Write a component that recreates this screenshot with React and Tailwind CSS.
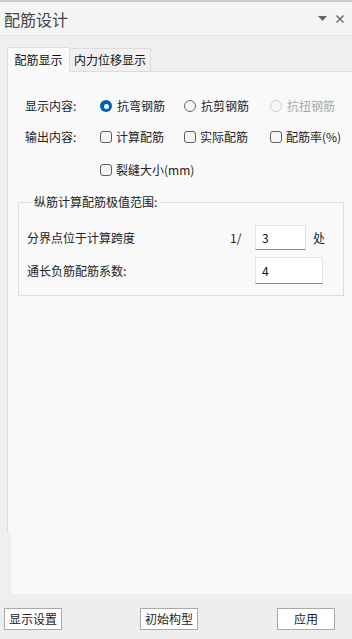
import React from "react";

const font = { fontFamily: '"Noto Sans CJK SC", "Noto Sans", sans-serif' };

const Radio = ({ checked, disabled, label }) => (
  <label className={`flex items-center gap-[5px] ${disabled ? "text-[#a8a8a8]" : "text-[#222]"}`}>
    {checked ? (
      <span className="w-[12px] h-[12px] rounded-full bg-[#005fb8] flex items-center justify-center">
        <span className="w-[5px] h-[5px] rounded-full bg-white" />
      </span>
    ) : (
      <span
        className={`w-[12px] h-[12px] rounded-full border bg-[#f6f6f6] ${
          disabled ? "border-[#d0d0d0]" : "border-[#6a6a6a]"
        }`}
      />
    )}
    <span>{label}</span>
  </label>
);

const Check = ({ label }) => (
  <label className="flex items-center gap-[4px] text-[#222]">
    <span className="w-[12px] h-[12px] rounded-[3px] border border-[#5f5f5f] bg-[#f6f6f6]" />
    <span>{label}</span>
  </label>
);

const Button = ({ children, className = "" }) => (
  <button
    className={`h-[22px] w-[58px] border border-[#a9a9a9] bg-white text-[12px] leading-none text-[#222] ${className}`}
  >
    {children}
  </button>
);

export default function App() {
  return (
    <div className="w-[352px] h-[639px] bg-[#efefef] flex flex-col text-[12px]" style={font}>
      {/* title bar */}
      <div className="border-t-2 border-[#cccccc] h-[36px] bg-[#f5f5f5] border-b border-b-[#e2e2e2] flex items-center justify-between pl-[4px] pr-[8px]">
        <span className="text-[16px] text-[#444] leading-none">配筋设计</span>
        <div className="flex items-center gap-[9px] text-[#666]">
          <svg width="9" height="6" viewBox="0 0 9 6">
            <path d="M0 0 H9 L4.5 5 Z" fill="#666" />
          </svg>
          <svg width="8" height="8" viewBox="0 0 8 8">
            <path d="M0.5 0.5 L7.5 7.5 M7.5 0.5 L0.5 7.5" stroke="#666" strokeWidth="1.4" />
          </svg>
        </div>
      </div>

      {/* tabs */}
      <div className="flex items-end pl-[7px] pt-[11px]">
        <div className="w-[63px] h-[25px] bg-[#fafafa] border border-b-0 border-[#dcdcdc] flex items-center justify-center text-[#111] relative -mb-px z-10">
          配筋显示
        </div>
        <div className="w-[81px] h-[23px] bg-[#f0f0f0] border border-l-0 border-b-0 border-[#dcdcdc] flex items-center justify-center text-[#111]">
          内力位移显示
        </div>
      </div>

      {/* content panel */}
      <div className="ml-[7px] h-[461px] bg-[#f9f9f9] border-l border-t border-[#dcdcdc] pt-[24px] pl-[17px]">
        <div className="flex items-center h-[20px]">
          <span className="w-[75px] text-[#222]">显示内容:</span>
          <div className="w-[84px]">
            <Radio checked label="抗弯钢筋" />
          </div>
          <div className="w-[86px]">
            <Radio label="抗剪钢筋" />
          </div>
          <Radio disabled label="抗扭钢筋" />
        </div>
        <div className="flex items-center h-[20px] mt-[11px]">
          <span className="w-[75px] text-[#222]">输出内容:</span>
          <div className="w-[84px]">
            <Check label="计算配筋" />
          </div>
          <div className="w-[86px]">
            <Check label="实际配筋" />
          </div>
          <Check label="配筋率(%)" />
        </div>
        <div className="flex items-center h-[20px] mt-[13px] pl-[75px]">
          <Check label="裂缝大小(mm)" />
        </div>

        <fieldset className="mt-[13px] ml-[-7px] w-[326px] border border-[#dcdcdc] pl-[8px] pr-[16px] pb-[11px]">
          <legend className="ml-[5px] px-[2px] text-[#222] leading-[18px]">纵筋计算配筋极值范围:</legend>
          <div className="flex items-center h-[25px] mt-[14px]">
            <span className="w-[203px] text-[#222]">分界点位于计算跨度</span>
            <span className="w-[25px] text-[#222]">1/</span>
            <div className="w-[51px] h-[25px] bg-white border border-[#e3e3e3] border-b-[#8a8a8a] flex items-center pl-[6px] text-[#111]">
              3
            </div>
            <span className="ml-[7px] text-[#222]">处</span>
          </div>
          <div className="flex items-center h-[27px] mt-[7px]">
            <span className="w-[228px] text-[#222]">通长负筋配筋系数:</span>
            <div className="w-[68px] h-[27px] bg-white border border-[#e3e3e3] border-b-[#8a8a8a] flex items-center pl-[6px] text-[#111]">
              4
            </div>
          </div>
        </fieldset>
      </div>
      <div className="ml-[11px] h-[62px] bg-[#f9f9f9]" />

      {/* footer */}
      <div className="flex-1 bg-[#eeeeee] flex items-start pt-[14px] pl-[4px]">
        <Button>显示设置</Button>
        <Button className="ml-[78px]">初始构型</Button>
        <Button className="ml-[79px]">应用</Button>
      </div>
    </div>
  );
}
